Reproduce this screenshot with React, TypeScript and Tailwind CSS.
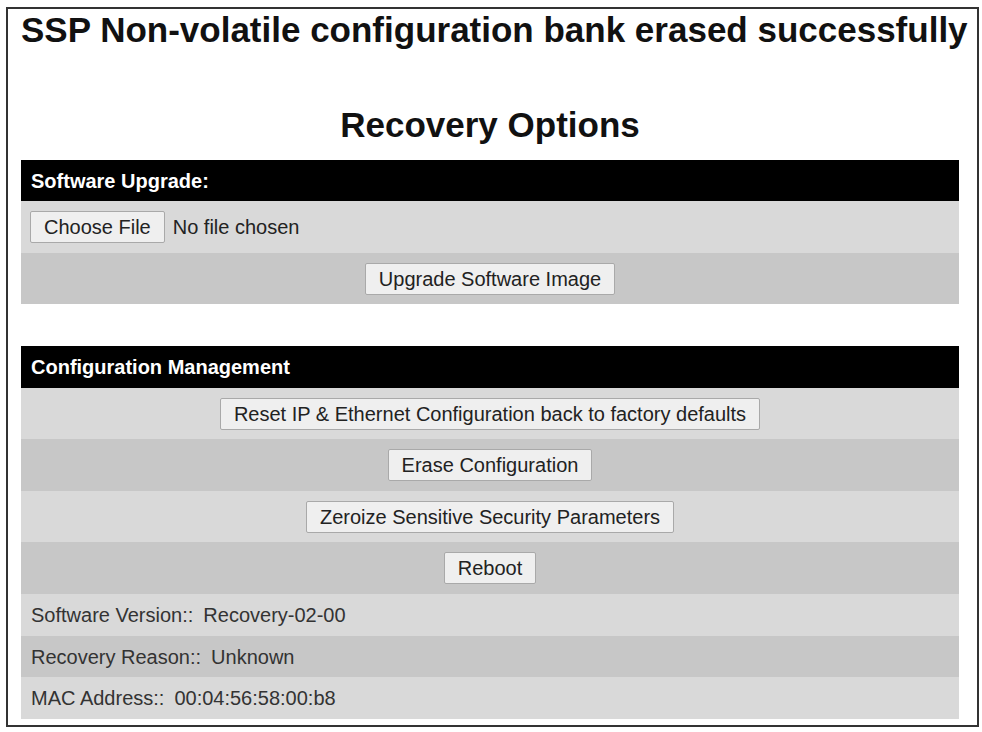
const btn =
  'h-[32px] px-[13px] bg-[#efefef] border border-[#a9a9a9] rounded-[2px] text-[20px] text-[#222] leading-none whitespace-nowrap';

const ButtonRow = ({ label, dark, tall }: { label: string; dark?: boolean; tall?: boolean }) => (
  <div
    className={`${tall ? 'h-[52px]' : 'h-[51px]'} flex items-center justify-center ${
      dark ? 'bg-[#c7c7c7]' : 'bg-[#d9d9d9]'
    }`}
  >
    <button className={btn}>{label}</button>
  </div>
);

const InfoRow = ({ label, value, dark, short }: { label: string; value: string; dark?: boolean; short?: boolean }) => (
  <div
    className={`${short ? 'h-[41px]' : 'h-[42px]'} flex items-center pl-[10px] text-[20px] text-[#333] ${
      dark ? 'bg-[#c7c7c7]' : 'bg-[#d9d9d9]'
    }`}
  >
    <span>{label}::</span>
    <span className="ml-[10px]">{value}</span>
  </div>
);

const SectionHeader = ({ title, tall }: { title: string; tall?: boolean }) => (
  <div
    className={`${tall ? 'h-[42px]' : 'h-[41px]'} bg-black flex items-center pl-[10px] text-white font-bold text-[20px]`}
  >
    {title}
  </div>
);

export default function App() {
  return (
    <div
      className="w-[982px] h-[732px] bg-white pt-[7px] pl-[6px]"
      style={{ fontFamily: '"Liberation Sans", Arial, sans-serif' }}
    >
      <div className="w-[973px] h-[720px] border-2 border-[#333] pl-[13px] pt-[1px]">
        <h1 className="text-[35px] font-bold leading-[40px] text-[#111] whitespace-nowrap">
          SSP Non-volatile configuration bank erased successfully
        </h1>
        <h2 className="w-[938px] mt-[55px] text-center text-[35px] font-bold leading-[40px] text-[#111]">
          Recovery Options
        </h2>

        {/* Software upgrade */}
        <div className="w-[938px] mt-[15px]">
          <SectionHeader title="Software Upgrade:" />
          <div className="h-[52px] bg-[#d9d9d9] flex items-center pl-[9px] gap-[8px] text-[20px] text-[#222]">
            <button className={btn}>Choose File</button>
            <span>No file chosen</span>
          </div>
          <ButtonRow label="Upgrade Software Image" dark />
        </div>

        {/* Configuration management */}
        <div className="w-[938px] mt-[42px]">
          <SectionHeader title="Configuration Management" tall />
          <ButtonRow label="Reset IP & Ethernet Configuration back to factory defaults" />
          <ButtonRow label="Erase Configuration" dark tall />
          <ButtonRow label="Zeroize Sensitive Security Parameters" />
          <ButtonRow label="Reboot" dark tall />
          <InfoRow label="Software Version" value="Recovery-02-00" />
          <InfoRow label="Recovery Reason" value="Unknown" dark short />
          <InfoRow label="MAC Address" value="00:04:56:58:00:b8" />
        </div>
      </div>
    </div>
  );
}
